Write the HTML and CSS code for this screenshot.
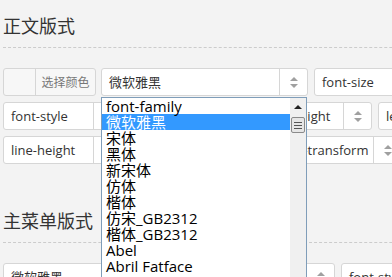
FILE: index.html
```html
<!DOCTYPE html>
<html lang="zh-CN">

<head>
    <meta charset="UTF-8" />
    <meta name="viewport" content="width=device-width, initial-scale=1" />
    <title>版式设置</title>
    <link rel="stylesheet" href="styles.css">
</head>

<body>
    <div class="page">
        <section class="block">
            <h2 class="block-title">正文版式</h2>
            <div class="rows">
                <div class="row">
                    <div class="color-pick">
                        <span class="swatch"></span>
                        <span class="pick-btn">选择颜色</span>
                    </div>
                    <div class="select family open">
                        <span class="select-text">微软雅黑</span>
                        <span class="select-arrow"><svg width="8" height="11" viewBox="0 0 8 11"><path d="M4 0 L8 4 L0 4 Z M4 11 L8 7 L0 7 Z" fill="#a0a0a0"/></svg></span>
                        <div class="dropdown">
                            <ul class="options">
                                <li>font-family</li>
                                <li class="active">微软雅黑</li>
                                <li>宋体</li>
                                <li>黑体</li>
                                <li>新宋体</li>
                                <li>仿体</li>
                                <li>楷体</li>
                                <li>仿宋_GB2312</li>
                                <li>楷体_GB2312</li>
                                <li>Abel</li>
                                <li>Abril Fatface</li>
                                <li>Aclonica</li>
                            </ul>
                            <div class="scrollbar">
                                <span class="scroll-up"></span>
                                <span class="scroll-thumb"><i></i><i></i><i></i></span>
                            </div>
                        </div>
                    </div>
                    <div class="select size">
                        <span class="select-text">font-size</span>
                        <span class="select-arrow"><svg width="8" height="11" viewBox="0 0 8 11"><path d="M4 0 L8 4 L0 4 Z M4 11 L8 7 L0 7 Z" fill="#a0a0a0"/></svg></span>
                    </div>
                </div>
                <div class="row">
                    <div class="select small">
                        <span class="select-text">font-style</span>
                        <span class="select-arrow"><svg width="8" height="11" viewBox="0 0 8 11"><path d="M4 0 L8 4 L0 4 Z M4 11 L8 7 L0 7 Z" fill="#a0a0a0"/></svg></span>
                    </div>
                    <div class="select small">
                        <span class="select-text">font-variant</span>
                        <span class="select-arrow"><svg width="8" height="11" viewBox="0 0 8 11"><path d="M4 0 L8 4 L0 4 Z M4 11 L8 7 L0 7 Z" fill="#a0a0a0"/></svg></span>
                    </div>
                    <div class="select small">
                        <span class="select-text">font-weight</span>
                        <span class="select-arrow"><svg width="8" height="11" viewBox="0 0 8 11"><path d="M4 0 L8 4 L0 4 Z M4 11 L8 7 L0 7 Z" fill="#a0a0a0"/></svg></span>
                    </div>
                    <div class="select small">
                        <span class="select-text">letter-spacing</span>
                        <span class="select-arrow"><svg width="8" height="11" viewBox="0 0 8 11"><path d="M4 0 L8 4 L0 4 Z M4 11 L8 7 L0 7 Z" fill="#a0a0a0"/></svg></span>
                    </div>
                </div>
                <div class="row">
                    <div class="select small">
                        <span class="select-text">line-height</span>
                        <span class="select-arrow"><svg width="8" height="11" viewBox="0 0 8 11"><path d="M4 0 L8 4 L0 4 Z M4 11 L8 7 L0 7 Z" fill="#a0a0a0"/></svg></span>
                    </div>
                    <div class="select medium">
                        <span class="select-text">text-decoration</span>
                        <span class="select-arrow"><svg width="8" height="11" viewBox="0 0 8 11"><path d="M4 0 L8 4 L0 4 Z M4 11 L8 7 L0 7 Z" fill="#a0a0a0"/></svg></span>
                    </div>
                    <div class="select wide">
                        <span class="select-text">text-transform</span>
                        <span class="select-arrow"><svg width="8" height="11" viewBox="0 0 8 11"><path d="M4 0 L8 4 L0 4 Z M4 11 L8 7 L0 7 Z" fill="#a0a0a0"/></svg></span>
                    </div>
                </div>
            </div>
        </section>

        <section class="block">
            <h2 class="block-title">主菜单版式</h2>
            <div class="rows">
                <div class="row">
                    <div class="select menu-family">
                        <span class="select-text">微软雅黑</span>
                        <span class="select-arrow"><svg width="8" height="11" viewBox="0 0 8 11"><path d="M4 0 L8 4 L0 4 Z M4 11 L8 7 L0 7 Z" fill="#a0a0a0"/></svg></span>
                    </div>
                    <div class="select small">
                        <span class="select-text">font-style</span>
                        <span class="select-arrow"><svg width="8" height="11" viewBox="0 0 8 11"><path d="M4 0 L8 4 L0 4 Z M4 11 L8 7 L0 7 Z" fill="#a0a0a0"/></svg></span>
                    </div>
                </div>
            </div>
        </section>
    </div>
</body>

</html>
```

FILE: styles.css
```css
body {
    margin: 0;
    background-color: #f3f3f3;
    color: #333;
    font-family: 'Open Sans', 'Noto Sans CJK SC', sans-serif;
    overflow: hidden;
}

.page {
    padding-left: 3px;
    width: 600px;
}

.block + .block {
    margin-top: 31px;
}

.block-title {
    margin: 0;
    padding: 13px 0 10px;
    font-size: 18px;
    line-height: 24px;
    font-weight: normal;
    color: #333;
    font-family: 'Noto Sans CJK SC', sans-serif;
    border-bottom: 1px dashed #ccc;
}

.rows {
    margin-top: 20px;
    display: flex;
    flex-direction: column;
    gap: 6px;
}

.row {
    display: flex;
    gap: 6px;
}

.color-pick {
    flex-shrink: 0;
    display: flex;
    width: 91px;
    height: 26px;
    border: 1px solid #d6d6d6;
    border-radius: 3px;
    background-color: #f7f7f7;
    margin-right: -1px;
}

.swatch {
    width: 31px;
    border-right: 1px solid #d6d6d6;
}

.pick-btn {
    flex: 1;
    text-align: center;
    font-size: 12px;
    line-height: 26px;
    color: #777;
    font-family: 'Noto Sans CJK SC', sans-serif;
}

.select {
    position: relative;
    flex-shrink: 0;
    display: flex;
    height: 26px;
    border: 1px solid #d6d6d6;
    border-radius: 3px;
    background-color: #fff;
    font-size: 13px;
    line-height: 26px;
}

.select-text {
    flex: 1;
    padding-left: 7px;
    white-space: nowrap;
    overflow: hidden;
}

.select-arrow {
    width: 27px;
    border-left: 1px solid #d6d6d6;
    display: flex;
    align-items: center;
    justify-content: center;
}

.family { width: 205px; }
.size { width: 120px; }
.small { width: 117px; }
.medium { width: 136px; }
.wide { width: 128px; }
.menu-family { width: 330px; }

.dropdown {
    position: absolute;
    z-index: 10;
    top: 28px;
    left: -1px;
    width: 204px;
    height: 200px;
    border: 1px solid #7f9db9;
    background-color: #fff;
    display: flex;
}

.options {
    list-style: none;
    margin: 0;
    padding: 0;
    flex: 1;
    font-size: 15px;
    line-height: 16px;
    color: #000;
    font-family: 'Open Sans', 'Noto Sans CJK SC', sans-serif;
}

.options li {
    height: 16px;
    padding-left: 4px;
    white-space: nowrap;
}

.options li.active {
    background-color: #3399ff;
    color: #fff;
}

.scrollbar {
    position: relative;
    width: 16px;
    background-color: #f0f0f0;
}

.scroll-up {
    position: absolute;
    top: 7px;
    left: 4px;
    border-left: 4px solid transparent;
    border-right: 4px solid transparent;
    border-bottom: 4px solid #222;
}

.scroll-thumb {
    position: absolute;
    top: 19px;
    left: 1px;
    width: 12px;
    height: 14px;
    border: 1px solid #8a8a8a;
    border-radius: 2px;
    background-color: #e6e6e6;
    display: flex;
    flex-direction: column;
    align-items: center;
    justify-content: center;
    gap: 2px;
}

.scroll-thumb i {
    display: block;
    width: 8px;
    height: 1px;
    background-color: #555;
}
```
